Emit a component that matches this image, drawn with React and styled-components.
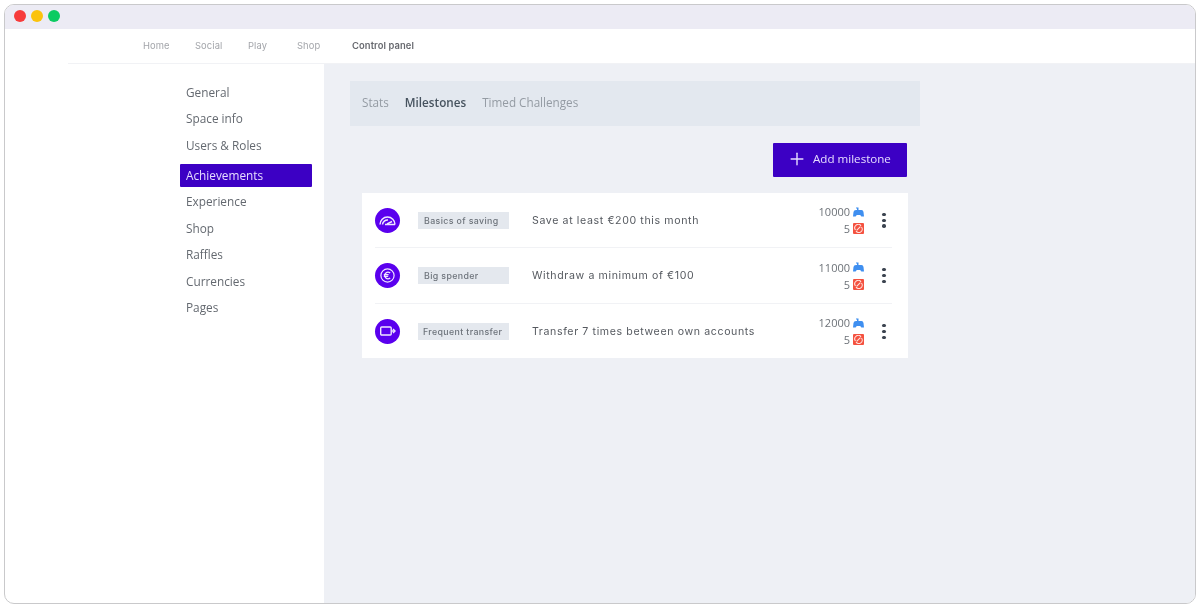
import React from "react";
import styled, { createGlobalStyle } from "styled-components";
import { Plus } from "lucide-react";

const Global = createGlobalStyle`
  html, body { margin: 0; padding: 0; background: #fff; }
  * { box-sizing: border-box; }
`;

const Frame = styled.div`
  width: 1192px;
  height: 600px;
  margin: 4px;
  border: 1px solid #c9c9cb;
  border-radius: 10px;
  overflow: hidden;
  background: #fff;
  display: flex;
  flex-direction: column;
  font-family: "Open Sans", sans-serif;
  filter: blur(0.35px);
`;
const TitleBar = styled.div`
  height: 24px;
  flex: none;
  background: #ecebf4;
  display: flex;
  align-items: center;
  gap: 5px;
  padding: 0 0 2px 9px;
`;
const Light = styled.span`
  width: 12px;
  height: 12px;
  border-radius: 50%;
  background: ${(p) => p.$color};
`;
const TopNav = styled.nav`
  height: 35px;
  flex: none;
  margin-left: 63px;
  padding: 0 0 2px 75px;
  display: flex;
  align-items: center;
  border-bottom: 1px solid #f1f2f5;
`;
const NavLink = styled.a`
  width: ${(p) => p.$w}px;
  font: ${(p) => (p.$active ? 600 : 400)} 9.4px "Inter", sans-serif;
  letter-spacing: 0.1px;
  color: ${(p) => (p.$active ? "#66686e" : "#a3a5aa")};
  white-space: nowrap;
`;
const Body = styled.div`
  flex: 1;
  display: flex;
  min-height: 0;
`;
const Sidebar = styled.aside`
  width: 319px;
  flex: none;
  padding: 14.5px 12px 0 175px;
  display: flex;
  flex-direction: column;
`;
const SideItem = styled.a`
  height: ${(p) => (p.$active ? 23 : 26.5)}px;
  margin: ${(p) => (p.$active ? "5.5px 0 1.5px" : "0")};
  padding-left: 6px;
  display: flex;
  align-items: center;
  font-size: 11.8px;
  color: ${(p) => (p.$active ? "#e6dcff" : "#646970")};
  background: ${(p) => (p.$active ? "#3c00c4" : "transparent")};
  border-radius: 1px;
`;
const Content = styled.main`
  flex: 1;
  background: #eef0f5;
  padding: 17px 0 0 26px;
`;
const Column = styled.div`
  width: 570px;
  display: flex;
  flex-direction: column;
`;
const Tabs = styled.div`
  height: 45px;
  background: #e3e8ef;
  padding: 0 0 3px 12px;
  display: flex;
  align-items: center;
  gap: 16px;
  font-size: 11.7px;
`;
const Tab = styled.a`
  color: ${(p) => (p.$active ? "#47535f" : "#949ba3")};
  font-weight: ${(p) => (p.$active ? 600 : 400)};
`;
const Actions = styled.div`
  display: flex;
  justify-content: flex-end;
  padding: 17px 13px 16px 0;
`;
const AddButton = styled.button`
  width: 134px;
  height: 34px;
  border: 0;
  border-radius: 1px;
  background: #3c00c4;
  color: #e6dcff;
  font: 400 11.6px "Open Sans", sans-serif;
  display: flex;
  align-items: center;
  gap: 6px;
  padding: 0 0 3px 14px;
`;
const Card = styled.section`
  width: 546px;
  height: 165px;
  margin-left: 12px;
  background: #fff;
  padding: 0 16px 0 13px;
`;
const Row = styled.div`
  height: 55.4px;
  display: flex;
  align-items: center;
  border-bottom: ${(p) => (p.$last ? "0" : "1px solid #f1f2f5")};
`;
const Badge = styled.span`
  width: 25px;
  height: 25px;
  flex: none;
  border-radius: 50%;
  background: #5a00ee;
  display: flex;
  align-items: center;
  justify-content: center;
`;
const Tag = styled.span`
  width: 91px;
  height: 17px;
  flex: none;
  margin-left: 18px;
  padding-left: ${(p) => p.$pad}px;
  background: #e4e8ee;
  display: flex;
  align-items: center;
  font: 500 8.8px "Inter", sans-serif;
  letter-spacing: 0.38px;
  color: #6d737b;
  white-space: nowrap;
`;
const Title = styled.span`
  flex: 1;
  margin-left: 23px;
  font: 400 10.6px "Inter", sans-serif;
  letter-spacing: 0.62px;
  color: #565a60;
  white-space: nowrap;
`;
const Rewards = styled.div`
  width: 60px;
  display: flex;
  flex-direction: column;
  align-items: flex-end;
  gap: 4px;
  font-size: 11px;
  color: #6d7278;
`;
const Reward = styled.span`
  display: flex;
  align-items: center;
  gap: 3px;
  height: 13px;
`;
const Coin = styled.span`
  width: 11px;
  height: 11px;
  background: #f4513f;
  border-radius: 1px;
  display: flex;
  align-items: center;
  justify-content: center;
`;
const More = styled.div`
  width: 8px;
  margin-left: 16px;
  margin-right: 4px;
  display: flex;
  flex-direction: column;
  align-items: center;
  gap: 2.6px;
  i {
    width: 3.4px;
    height: 3.4px;
    border-radius: 50%;
    background: #3c4450;
  }
`;

const Gauge = () => (
  <svg width="17" height="11" viewBox="0 0 17 11" fill="none" stroke="#efe6ff" strokeWidth="1.5">
    <path d="M1 9.5 A7.5 7.5 0 0 1 16 9.5" />
    <path d="M3.5 9.5 A5 5 0 0 1 9 5" />
    <path d="M6 9.5 H16" strokeWidth="1.6" />
    <path d="M8 9 L13 6.5" strokeWidth="1.4" />
  </svg>
);
const Euro = () => (
  <svg width="15" height="15" viewBox="0 0 15 15" fill="none" stroke="#efe6ff" strokeWidth="1.2">
    <circle cx="7.5" cy="7.5" r="6.6" />
    <path d="M10.2 5 A3.3 3.3 0 1 0 10.2 10 M3.8 6.7 H8.6 M3.8 8.4 H8.2" />
  </svg>
);
const Transfer = () => (
  <svg width="16" height="10" viewBox="0 0 16 10" fill="none" stroke="#efe6ff" strokeWidth="1.4">
    <rect x="0.7" y="1" width="10.5" height="8" rx="1" />
    <path d="M13 3 L15 5 L13 7" />
    <path d="M11.5 5 H14.5" />
  </svg>
);
const Pad = () => (
  <svg width="11" height="10" viewBox="0 0 11 10">
    <path d="M3 .5 H5.5 V3 H8.5 Q10.2 3 10.5 5 L11 9.5 H8.4 L7.2 8 H3.8 L2.6 9.5 H0 L.5 5 Q.8 3 3 3 H4 V1.5 H3 Z" fill="#3f8ff0" />
  </svg>
);
const Slash = () => (
  <svg width="9" height="9" viewBox="0 0 9 9" fill="none" stroke="#ffe3df" strokeWidth="1.1">
    <path d="M1.5 6 A3.2 3.2 0 0 1 7 1.8" />
    <path d="M7.5 3 A3.2 3.2 0 0 1 2 7.2" />
    <path d="M2.6 6.4 L6.4 2.6" />
  </svg>
);

const links = [["Home", 52], ["Social", 53], ["Play", 49], ["Shop", 55], ["Control panel", 80, true]];
const sections = ["General", "Space info", "Users & Roles", "Achievements", "Experience", "Shop", "Raffles", "Currencies", "Pages"];
const rows = [
  { Icon: Gauge, tag: "Basics of saving", pad: 6, text: "Save at least €200 this month", pts: 10000 },
  { Icon: Euro, tag: "Big spender", pad: 6, text: "Withdraw a minimum of €100", pts: 11000 },
  { Icon: Transfer, tag: "Frequent transfer", pad: 5, text: "Transfer 7 times between own accounts", pts: 12000 },
];

export default function App() {
  return (
    <Frame>
      <Global />
      <TitleBar>
        <Light $color="#f73b3b" />
        <Light $color="#fbc30d" />
        <Light $color="#0ccb62" />
      </TitleBar>
      <TopNav>
        {links.map(([label, w, active]) => (
          <NavLink key={label} $w={w} $active={active}>{label}</NavLink>
        ))}
      </TopNav>
      <Body>
        <Sidebar>
          {sections.map((s) => (
            <SideItem key={s} $active={s === "Achievements"}>{s}</SideItem>
          ))}
        </Sidebar>
        <Content>
          <Column>
            <Tabs>
              <Tab>Stats</Tab>
              <Tab $active>Milestones</Tab>
              <Tab>Timed Challenges</Tab>
            </Tabs>
            <Actions>
              <AddButton><Plus size={20} strokeWidth={1.7} />Add milestone</AddButton>
            </Actions>
            <Card>
              {rows.map(({ Icon, tag, pad, text, pts }, i) => (
                <Row key={tag} $last={i === rows.length - 1}>
                  <Badge><Icon /></Badge>
                  <Tag $pad={pad}>{tag}</Tag>
                  <Title>{text}</Title>
                  <Rewards>
                    <Reward>{pts}<Pad /></Reward>
                    <Reward>5<Coin><Slash /></Coin></Reward>
                  </Rewards>
                  <More><i /><i /><i /></More>
                </Row>
              ))}
            </Card>
          </Column>
        </Content>
      </Body>
    </Frame>
  );
}
